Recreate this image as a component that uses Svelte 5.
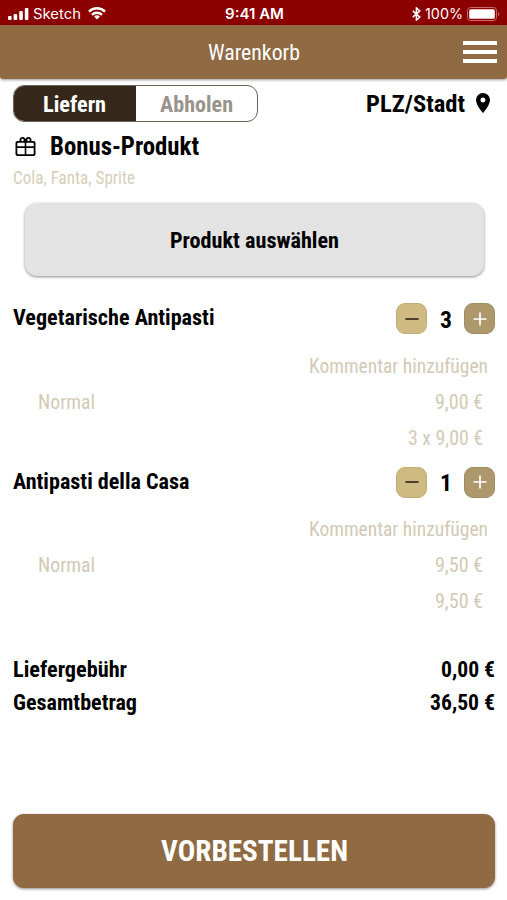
<script lang="ts">
	interface Item {
		name: string;
		nameWidth: number;
		count: number;
		price: string;
		total: string;
		totalWidth: number;
	}

	let mode = $state('delivery');

	let items: Item[] = $state([
		{ name: 'Vegetarische Antipasti', nameWidth: 201.5, count: 3, price: '9,00 €', total: '3 x 9,00 €', totalWidth: 75 },
		{ name: 'Antipasti della Casa', nameWidth: 176.5, count: 1, price: '9,50 €', total: '9,50 €', totalWidth: 48 }
	]);
</script>

<!-- condensed text, fitted to a set width and centred on its cap height -->
{#snippet label(text: string, width: number, size: number, bold = false)}
	<svg class="label" class:bold {width} height="20">
		<text y={10 + size * 0.356} font-size={size} textLength={width} lengthAdjust="spacingAndGlyphs">{text}</text>
	</svg>
{/snippet}

<div class="screen">
	<div class="status-bar">
		<div class="status-left">
			<svg width="21" height="12" viewBox="0 0 21 12" fill="#fff">
				<rect x="0" y="8" width="3.6" height="4" rx="1" />
				<rect x="5.6" y="6" width="3.6" height="6" rx="1" />
				<rect x="11.2" y="3" width="3.6" height="9" rx="1" />
				<rect x="16.8" y="0" width="3.6" height="12" rx="1" />
			</svg>
			{@render label('Sketch', 48, 14)}
			<svg class="wifi" width="18" height="13" viewBox="0 0 18 13" fill="none" stroke="#fff" stroke-width="2.4">
				<path d="M1 4.6a11.4 11.4 0 0 1 16 0M4 7.8a7.1 7.1 0 0 1 10 0" />
				<path d="M9 12.4 6.1 9.600a4.1 4.1 0 0 1 5.8 0z" fill="#fff" stroke="none" />
			</svg>
		</div>
		<div class="status-time">{@render label('9:41 AM', 59, 14, true)}</div>
		<div class="status-right">
			<svg width="9" height="14" viewBox="0 0 9 14" fill="none" stroke="#fff" stroke-width="1.5">
				<path d="m.8 3.9 7 6.2-3.4 3V.9l3.4 3-7 6.2" />
			</svg>
			{@render label('100%', 38, 14)}
			<svg class="battery" width="33" height="14" viewBox="0 0 33 14">
				<rect x=".5" y=".5" width="29" height="13" rx="3" fill="none" stroke="#c66a6a" />
				<rect x="2.2" y="2.2" width="25.6" height="9.6" rx="1.5" fill="#fff" />
				<path d="M31 5v4q1.3-.5 1.3-2T31 5" fill="#c66a6a" />
			</svg>
		</div>
	</div>

	<header>
		{@render label('Warenkorb', 92, 22)}
		<button class="menu" type="button" aria-label="Menü">
			<span></span>
			<span></span>
			<span></span>
		</button>
	</header>

	<main>
		<div class="top-row">
			<div class="toggle">
				<button class:active={mode === 'delivery'} type="button" onclick={() => (mode = 'delivery')}>
					{@render label('Liefern', 63, 22, true)}
				</button>
				<button class:active={mode === 'pickup'} type="button" onclick={() => (mode = 'pickup')}>
					{@render label('Abholen', 73, 22, true)}
				</button>
			</div>
			<div class="location">
				{@render label('PLZ/Stadt', 99, 24.5, true)}
				<svg width="14" height="20" viewBox="0 0 14 20">
					<path d="M7 0a7 7 0 0 0-7 7c0 5.2 7 13 7 13s7-7.8 7-13a7 7 0 0 0-7-7zm0 9.5a2.5 2.5 0 1 1 0-5 2.5 2.5 0 0 1 0 5z" />
				</svg>
			</div>
		</div>

		<div class="bonus">
			<svg width="25" height="24" viewBox="0 0 24 24">
				<path d="M20 6h-2.18c.11-.31.18-.65.18-1 0-1.66-1.34-3-3-3-1.05 0-1.96.54-2.5 1.35l-.5.67-.5-.68C10.960 2.54 10.050 2 9 2 7.340 2 6 3.340 6 5c0 .35.07.69.18 1H4c-1.110 0-1.990.89-1.990 2L2 19c0 1.110.89 2 2 2h16c1.110 0 2-.89 2-2V8c0-1.110-.89-2-2-2zm-5-2.200c.66 0 1.200.54 1.200 1.200S15.660 6.200 15 6.200 13.800 5.660 13.800 5 14.340 3.800 15 3.800zm-6 0c.66 0 1.200.54 1.200 1.200S9.660 6.200 9 6.200 7.800 5.660 7.800 5 8.340 3.800 9 3.800zM11.200 19.200H4.500q-.7 0-.7-.7V13h7.400zm0-8H3.800V8.500q0-.7.7-.7h6.700zm9 7.300q0 .7-.7.7h-6.700V13h7.400zm0-7.300h-7.400V7.800h6.700q.7 0 .7.7z" />
			</svg>
			{@render label('Bonus-Produkt', 149, 25, true)}
		</div>
		<div class="bonus-hint">{@render label('Cola, Fanta, Sprite', 122, 17.8)}</div>
		<button class="choose" type="button">{@render label('Produkt auswählen', 169, 22, true)}</button>

		{#each items as item}
			<section class="item">
				<div class="item-head">
					<div class="item-name">{@render label(item.name, item.nameWidth, 22, true)}</div>
					<div class="stepper">
						<button class="minus" type="button" aria-label="Weniger" onclick={() => item.count--}>
							<svg width="14" height="14" viewBox="0 0 14 14"><path d="M.5 7h13" /></svg>
						</button>
						{@render label(String(item.count), 12, 24, true)}
						<button class="plus" type="button" aria-label="Mehr" onclick={() => item.count++}>
							<svg width="14" height="14" viewBox="0 0 14 14"><path d="M.5 7h13M7 .5v13" /></svg>
						</button>
					</div>
				</div>
				<div class="row comment">{@render label('Kommentar hinzufügen', 179, 20)}</div>
				<div class="row">
					{@render label('Normal', 57, 20)}
					{@render label(item.price, 48, 20)}
				</div>
				<div class="row total">{@render label(item.total, item.totalWidth, 20)}</div>
			</section>
		{/each}

		<div class="sums">
			<div class="sum">
				{@render label('Liefergebühr', 114, 22, true)}
				{@render label('0,00 €', 54, 22, true)}
			</div>
			<div class="sum">
				{@render label('Gesamtbetrag', 124, 22, true)}
				{@render label('36,50 €', 65, 22, true)}
			</div>
		</div>

		<button class="order" type="button">{@render label('VORBESTELLEN', 187, 29, true)}</button>
	</main>
</div>

<style>
	:global(body) {
		margin: 0;
		background: #fff;
	}

	.screen {
		display: flex;
		flex-direction: column;
		width: 507px;
		height: 900px;
		overflow: hidden;
		background: #fff;
		color: #000;
		font-family: 'Roboto Condensed', Roboto, sans-serif;
		font-stretch: 75%;
	}

	button {
		display: flex;
		align-items: center;
		justify-content: center;
		box-sizing: border-box;
		padding: 0;
		border: 0;
		font: inherit;
		font-stretch: inherit;
		color: inherit;
		background: none;
		cursor: pointer;
	}

	svg {
		flex: none;
		display: block;
	}

	.label {
		overflow: visible;
		fill: currentColor;
	}

	.bold {
		font-weight: 700;
	}

	.status-bar {
		display: grid;
		grid-template-columns: 1fr auto 1fr;
		align-items: center;
		height: 25px;
		padding: 2px 7px 0 8px;
		box-sizing: border-box;
		background: #8c0000;
		color: #fff;
		font-family: Inter, sans-serif;
	}

	.status-time .bold {
		font-weight: 600;
	}

	.status-left,
	.status-right {
		display: flex;
		align-items: center;
		gap: 4px;
	}

	.status-right {
		justify-content: flex-end;
	}

	.wifi {
		margin-left: 3px;
	}

	header {
		display: grid;
		grid-template-columns: 1fr auto 1fr;
		align-items: center;
		flex: none;
		height: 54px;
		padding: 0 10px;
		border-radius: 0 0 3px 3px;
		background: #8f6a42;
		box-shadow: 0 1px 3px rgba(0, 0, 0, 0.4);
		color: #fff;
	}

	header .label {
		grid-column: 2;
	}

	.menu {
		flex-direction: column;
		justify-self: end;
		gap: 5px;
		width: 34px;
	}

	.menu span {
		width: 34px;
		height: 4px;
		background: #fff;
	}

	main {
		display: flex;
		flex-direction: column;
		flex: 1;
		padding: 6px 12px 12px 13px;
	}

	.top-row {
		display: flex;
		justify-content: space-between;
		height: 37px;
	}

	.toggle {
		display: flex;
		box-sizing: border-box;
		width: 245px;
		border: 1px solid #6b6255;
		border-radius: 11px;
		overflow: hidden;
	}

	.toggle button {
		flex: 1;
		color: #9a938c;
	}

	.toggle button.active {
		background: #35271a;
		color: #fff;
	}

	.location {
		display: flex;
		align-items: center;
		gap: 11px;
		padding: 0 5px 1px 0;
	}

	.bonus {
		display: flex;
		align-items: center;
		gap: 12px;
		height: 24px;
		margin-top: 13px;
	}

	.bonus .label {
		margin-bottom: 2px;
	}

	.bonus-hint {
		margin-top: 9px;
		color: #d6ceb8;
	}

	.choose {
		flex: none;
		height: 73px;
		margin: 15px 11px 24px 12px;
		border-radius: 12px;
		background: #e3e3e3;
		box-shadow: 0 1px 3px rgba(0, 0, 0, 0.45);
	}

	.item {
		height: 163.6px;
	}

	.item-head {
		display: flex;
		align-items: center;
		justify-content: space-between;
		height: 37px;
		margin-bottom: 10.5px;
	}

	.item-name {
		margin-bottom: 3px;
	}

	.stepper {
		display: flex;
		align-items: center;
		justify-content: space-between;
		width: 99px;
	}

	.stepper button {
		width: 31px;
		height: 31px;
		border-radius: 9px;
	}

	.stepper path {
		fill: none;
		stroke: currentColor;
		stroke-width: 1.7;
	}

	.minus {
		border: 1px solid #c3ad76;
		background: #cfba82;
		color: #35271a;
	}

	.plus {
		border: 1px solid #a28d60;
		background: #ac986b;
		color: #fff;
	}

	.row {
		display: flex;
		align-items: center;
		justify-content: space-between;
		height: 36px;
		padding: 0 12px 0 25px;
		color: #d2cab5;
	}

	.comment,
	.total {
		justify-content: flex-end;
	}

	.comment {
		padding-right: 7px;
	}

	.sums {
		margin-top: 25px;
	}

	.sum {
		display: flex;
		align-items: center;
		justify-content: space-between;
		height: 33px;
	}

	.order {
		flex: none;
		height: 74px;
		margin-top: auto;
		border-radius: 11px;
		background: #8f6a42;
		box-shadow: 0 1px 3px rgba(0, 0, 0, 0.45);
		color: #fff;
	}
</style>
